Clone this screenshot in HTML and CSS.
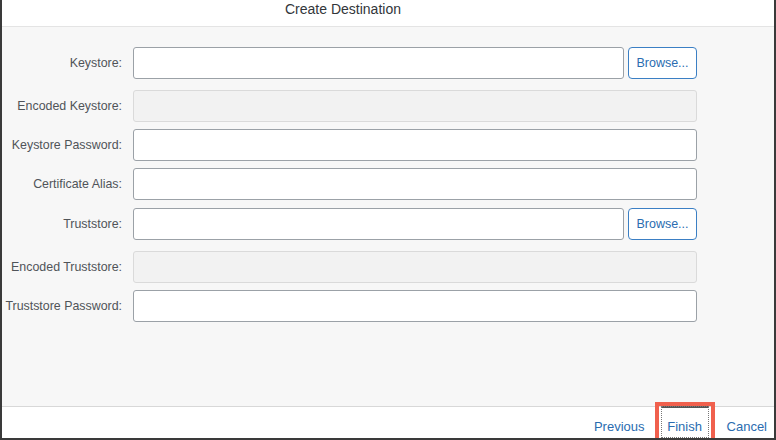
FILE: index.html
```html
<!DOCTYPE html>
<html>
<head>
<meta charset="utf-8">
<link rel="stylesheet" href="styles.css">
</head>
<body>
<div class="dialog">
  <header class="header">
    <h1 class="title">Create Destination</h1>
  </header>
  <main class="content">
    <form class="form">
      <div class="row row-file">
        <label class="label">Keystore:</label>
        <div class="field">
          <input class="input" type="text">
          <button type="button" class="browse">Browse...</button>
        </div>
      </div>
      <div class="row">
        <label class="label">Encoded Keystore:</label>
        <div class="field"><input class="input" type="text" disabled></div>
      </div>
      <div class="row">
        <label class="label">Keystore Password:</label>
        <div class="field"><input class="input" type="password"></div>
      </div>
      <div class="row row-alias">
        <label class="label">Certificate Alias:</label>
        <div class="field"><input class="input" type="text"></div>
      </div>
      <div class="row row-file">
        <label class="label">Truststore:</label>
        <div class="field">
          <input class="input" type="text">
          <button type="button" class="browse">Browse...</button>
        </div>
      </div>
      <div class="row">
        <label class="label">Encoded Truststore:</label>
        <div class="field"><input class="input" type="text" disabled></div>
      </div>
      <div class="row">
        <label class="label">Truststore Password:</label>
        <div class="field"><input class="input" type="password"></div>
      </div>
    </form>
  </main>
  <footer class="footer">
    <button type="button" class="action">Previous</button>
    <button type="button" class="action action-focus">Finish<span class="highlight"></span></button>
    <button type="button" class="action action-last">Cancel</button>
  </footer>
</div>
</body>
</html>
```

FILE: styles.css
```css
* { box-sizing: border-box; }
html, body { margin: 0; padding: 0; }
body {
  width: 776px;
  height: 440px;
  overflow: hidden;
  font-family: "Liberation Sans", Arial, sans-serif;
  background: #fff;
}
.dialog {
  width: 776px;
  height: 440px;
  display: flex;
  flex-direction: column;
  border-left: 2px solid #3a3a3a;
  border-right: 2px solid #3a3a3a;
  border-bottom: 2px solid #3a3a3a;
  overflow: hidden;
  background: #fff;
}
.header {
  height: 27px;
  flex: none;
  background: #fff;
  border-bottom: 1px solid #e4e4e4;
  padding-left: 283px;
}
.title {
  margin: 0;
  font-weight: normal;
  font-size: 14px;
  line-height: 18px;
  color: #32363a;
}
.content {
  flex: 1;
  background: #f7f7f7;
  padding-top: 20px;
}
.form {
  display: flex;
  flex-direction: column;
  gap: 7px;
}
.row {
  display: flex;
  align-items: center;
  height: 32px;
}
.row-file { margin-bottom: 4px; }
.row-alias { margin-bottom: 1px; }
.label {
  width: 120px;
  flex: none;
  text-align: right;
  font-size: 12.4px;
  color: #505459;
  margin-right: 11px;
}
.field {
  width: 564px;
  display: flex;
  gap: 4px;
  height: 32px;
}
.input {
  flex: 1;
  min-width: 0;
  height: 32px;
  border: 1px solid #9ba1a7;
  border-radius: 3px;
  background: #fff;
  margin: 0;
  padding: 0 8px;
  font-family: inherit;
  font-size: 13px;
}
.input:disabled {
  background: #f2f2f2;
  border-color: #dadada;
}
.browse {
  width: 69px;
  flex: none;
  height: 32px;
  border: 1px solid #3b7fc4;
  border-radius: 4px;
  background: #fff;
  color: #2a6cb0;
  font-family: inherit;
  font-size: 12.5px;
  padding: 0;
  margin: 0;
}
.footer {
  height: 32px;
  flex: none;
  background: #fff;
  border-top: 1px solid #d8d8d8;
  display: flex;
  justify-content: flex-end;
  align-items: stretch;
  padding-right: 0;
}
.action {
  position: relative;
  border: none;
  background: transparent;
  color: #2a6cb0;
  font-family: inherit;
  font-size: 13px;
  padding: 8px 8px 0;
  margin: 0 0 0 8px;
}
.action-last {
  margin-left: 10px;
  padding-right: 7px;
}
.action-focus {
  width: 48px;
  padding: 7px 0 0;
  border-top: 2px solid #555;
  outline: 1px dotted #777;
  outline-offset: -1px;
  margin-top: -1px;
}
.highlight {
  position: absolute;
  left: -6px;
  right: -6px;
  top: -6px;
  bottom: -10px;
  border: 4px solid #f0604d;
  pointer-events: none;
}
```
